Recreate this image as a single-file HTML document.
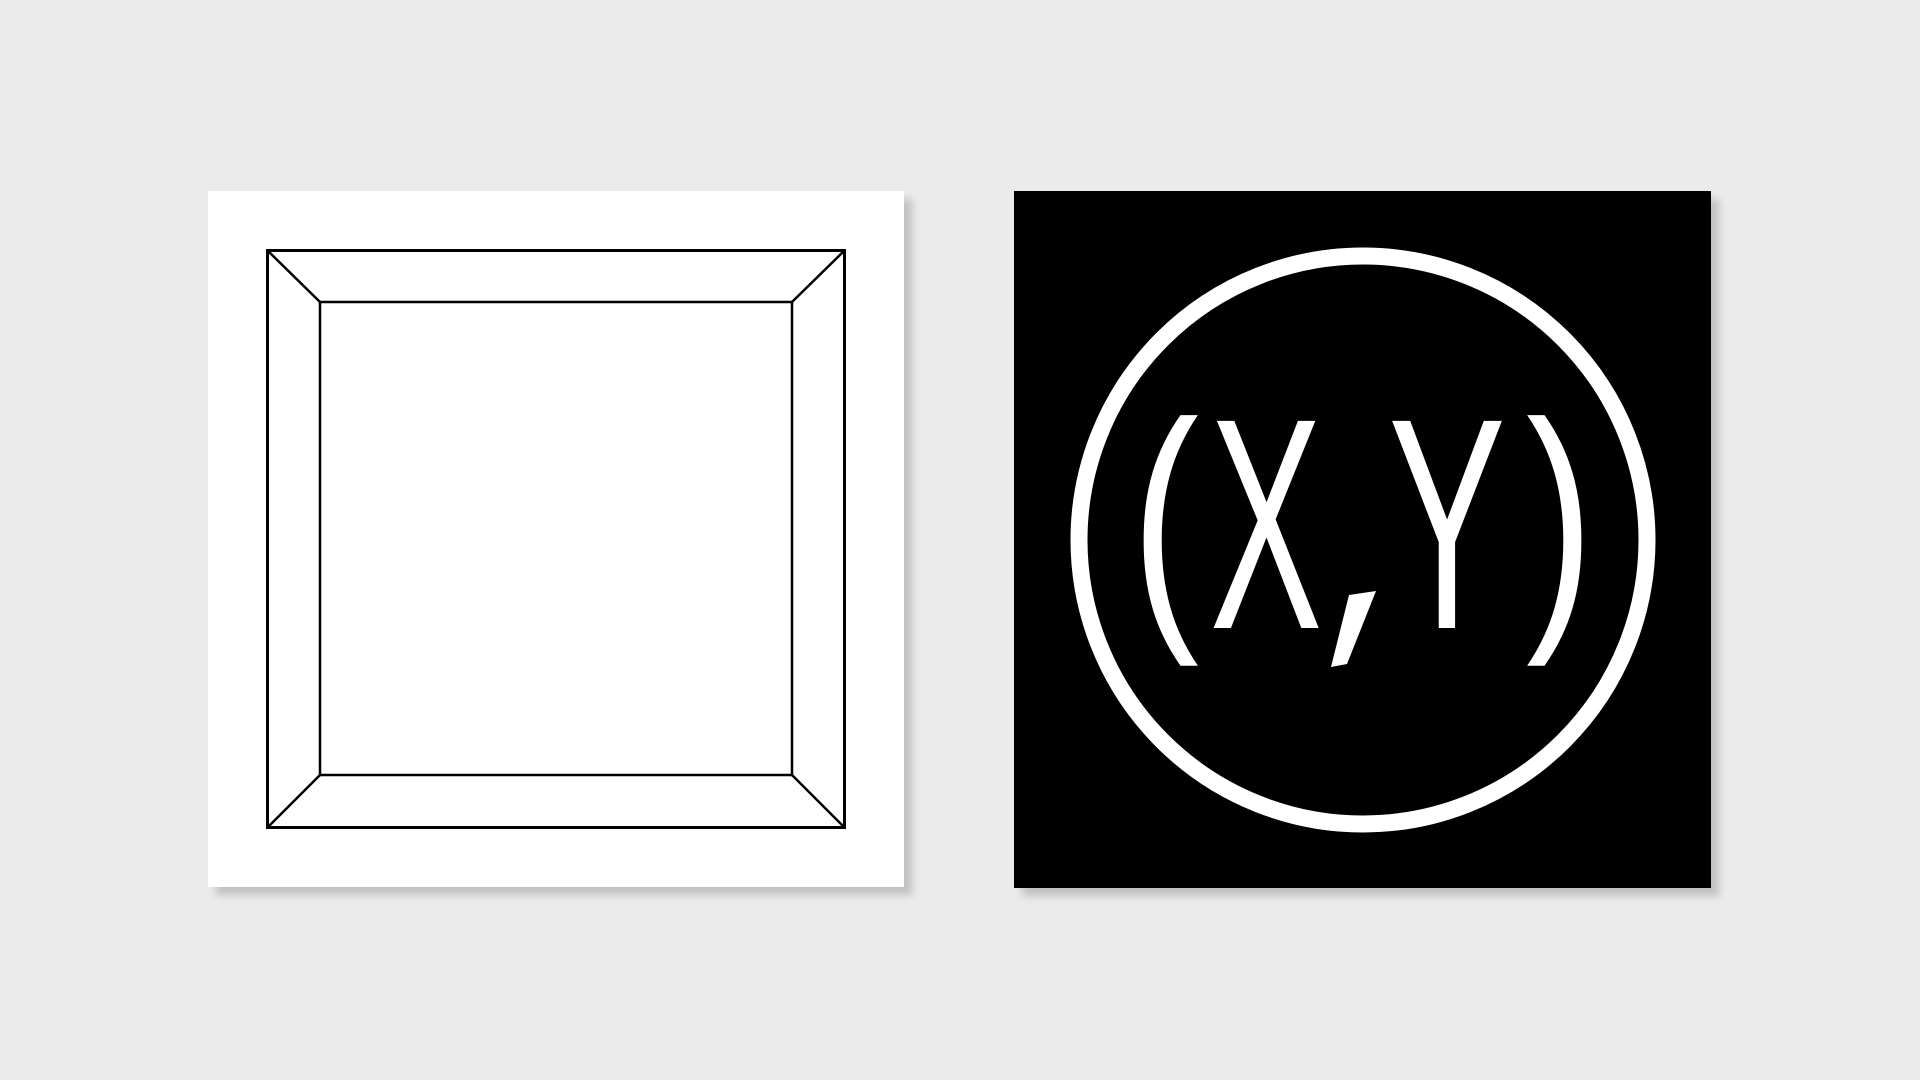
<!DOCTYPE html>
<html><head><meta charset="utf-8"><style>
html,body{margin:0;padding:0;width:1920px;height:1080px;background:#ebebeb;overflow:hidden}
.card{position:absolute;box-shadow:8px 8px 8px rgba(0,0,0,0.18)}
</style></head><body>
<div class="card" style="left:208px;top:191px;width:696px;height:696px;background:#fff"></div>
<div class="card" style="left:1014px;top:191px;width:697px;height:697px;background:#000"></div>
<svg width="1920" height="1080" style="position:absolute;left:0;top:0">
<g fill="none" stroke="#000" stroke-width="2.5">
<rect x="267.5" y="250.5" width="577" height="577" stroke-width="3"/>
<rect x="320" y="302" width="472" height="473"/>
<line x1="268" y1="251" x2="320" y2="302"/>
<line x1="844" y1="251" x2="792" y2="302"/>
<line x1="268" y1="827" x2="320" y2="775"/>
<line x1="844" y1="827" x2="792" y2="775"/>
</g>
<circle cx="1363" cy="540" r="284" fill="none" stroke="#fff" stroke-width="17"/>
<g fill="#fff" font-family="Liberation Sans, sans-serif" text-anchor="middle">
<text transform="translate(1165,610) scale(0.76,1)" font-size="269">(</text>
<text transform="translate(1560,610) scale(0.76,1)" font-size="269">)</text>
<text transform="translate(1266,628) scale(0.56,1)" font-size="301">X</text>
<text transform="translate(1447,628) scale(0.585,1)" font-size="301">Y</text>
</g>
<polygon fill="#fff" points="1349,595 1376,591 1347,664 1331,667"/>
</svg>
</body></html>
